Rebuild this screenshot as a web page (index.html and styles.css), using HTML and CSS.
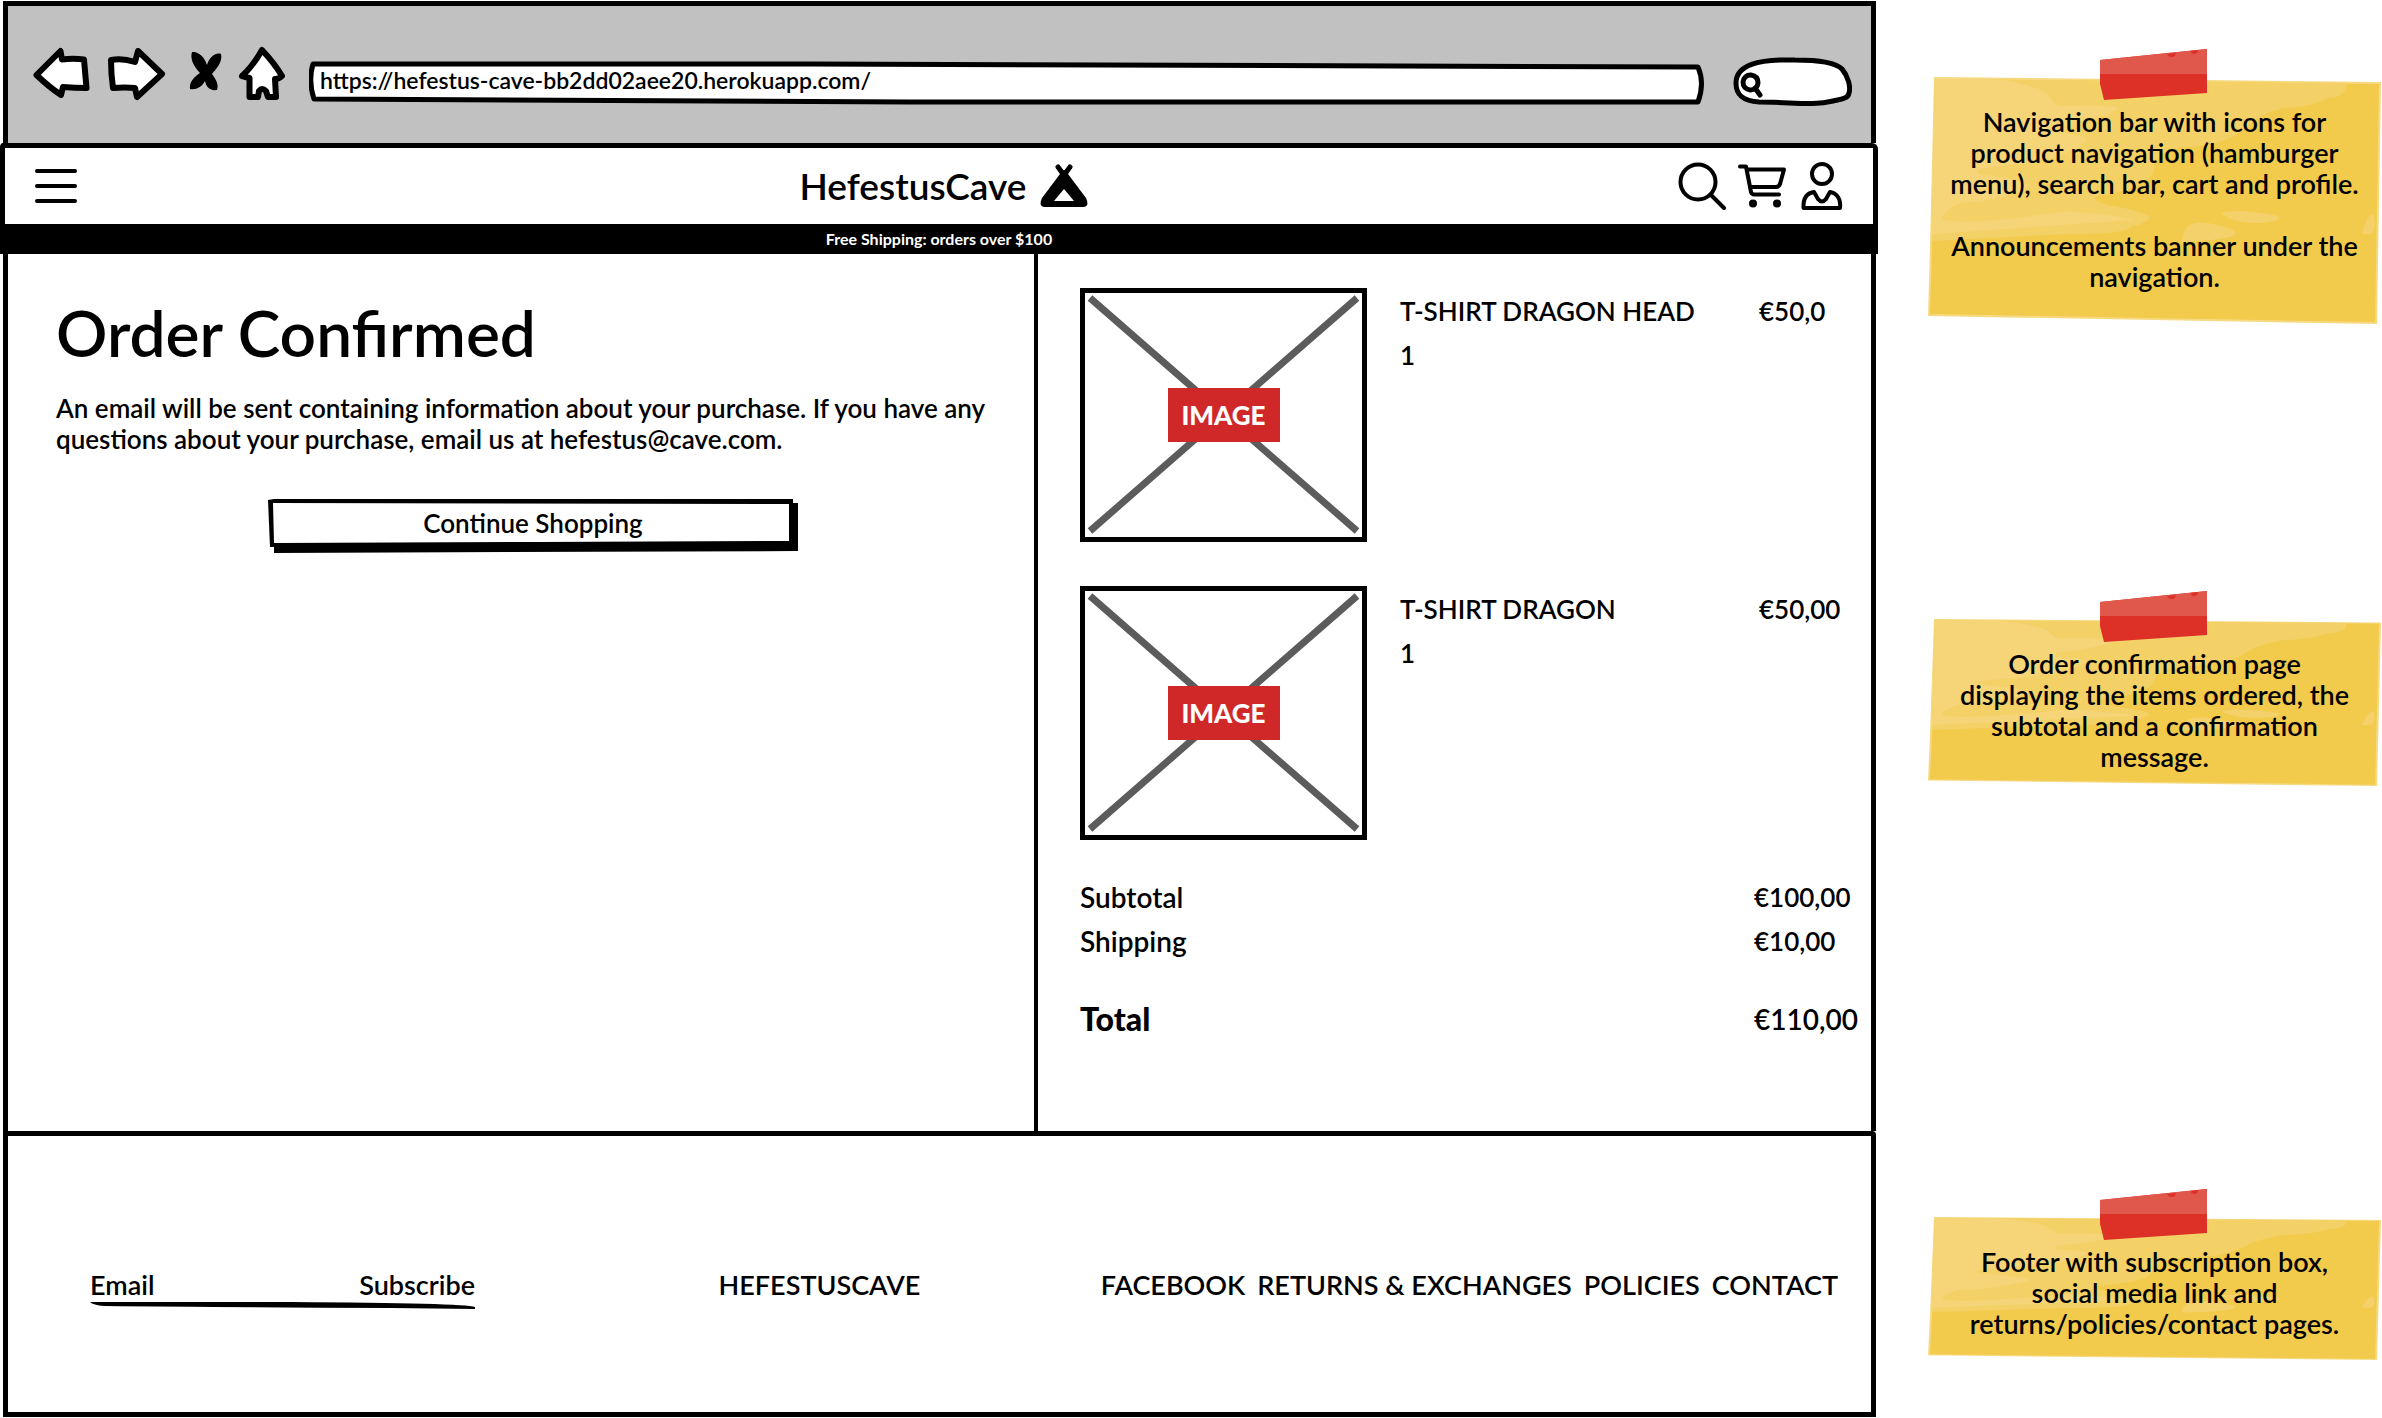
FILE: index.html
```html
<!DOCTYPE html>
<html lang="en">
<head>
<meta charset="utf-8">
<meta name="viewport" content="width=device-width, initial-scale=1">
<title>HefestusCave – Order Confirmed</title>
<link rel="stylesheet" href="styles.css">
</head>
<body>
<svg class="defs" aria-hidden="true">
  <symbol id="note-paper" viewBox="0 0 453 247" preserveAspectRatio="none">
    <path fill="#f6d980" d="M6 0 453 5 449 247 0 239 2 170Z"/>
    <path fill="#f2ca4c" d="M7 2 451 7 447 245 2 237 4 170Z"/>
    <path fill="#f3d166" d="M7 2 418 6Q420 20 400 21Q385 30 355 31Q330 38 318 50Q300 68 260 70Q228 72 226 92Q222 112 170 119Q160 122 180 128Q225 136 221 142Q210 150 205 148Q200 158 140 157L4 164Z"/>
    <path fill="#f5d578" d="M7 2 70 2Q115 10 120 18Q126 28 132 29Q190 28 190 31Q180 40 130 50Q120 56 140 57Q162 60 158 64Q140 82 80 88Q40 92 52 97Q110 105 98 111Q60 127 34 125Q14 134 14 142Q30 150 140 134Q200 140 206 143Q190 144 4 157Z"/>
    <path fill="#f4d16a" d="M293 136Q310 131 350 139Q356 144 335 146Q305 147 293 136ZM254 165Q255 142 280 146Q320 154 302 160Q285 164 254 165ZM435 152Q444 130 446 140Q448 158 440 157Q432 158 435 152Z"/>
  </symbol>
  <symbol id="tape" viewBox="0 0 109 52">
    <path fill="#dd3027" d="M1 11 108 0 108 44 5 51 1 35Z"/>
    <path fill="#e0574c" d="M1 11 108 0 108 25H1Z"/>
    <path fill="#dd3027" d="M68 5 77 4Q76 8 73 8Q69 8 68 5ZM92 2 99 1Q99 5 95 5Q92 5 92 2Z"/>
  </symbol>
</svg>

<div class="page">
  <div class="frame">
    <div class="chrome">
      <div class="chrome-buttons">
        <button class="icon-button" type="button" aria-label="Back">
          <svg width="60" height="56"><path class="sketch" d="M3.500 29 27.500 5 29 13.500Q40 12 51 13.500L53.500 42Q42 42 30 41L28 49Q16 41 3.500 29Z"/></svg>
        </button>
        <button class="icon-button" type="button" aria-label="Forward">
          <svg width="65" height="56"><path class="sketch" d="M8 14Q20 12 32 16L35 5 59 28 34 51 32 42Q22 41 10 42Q8 28 8 14Z"/></svg>
        </button>
        <button class="icon-button" type="button" aria-label="Stop">
          <svg width="51" height="56"><path d="M14 6C21 5 27 12 29 19C31 12 37 6 43 8C45 16 38 23 34 28C38 33 41 39 39 44C31 45 28 40 27 35C24 41 18 44 12 43C11 36 16 31 22 27C15 20 12 12 14 6Z"/></svg>
        </button>
        <button class="icon-button" type="button" aria-label="Home">
          <svg width="46" height="56"><path class="sketch" d="M23 4Q36 18 43 30Q40 33 36 33L37 51H29L27 45Q23 41 20 45L19 51H10.500L10.500 32 3 30Q14 20 23 4Z"/></svg>
        </button>
      </div>
      <div class="address">
        <svg class="backdrop" viewBox="0 0 1394 44" preserveAspectRatio="none"><path class="sketch" d="M4 3H500L1387 6Q1394 22 1387 41H600L5 38Q-1 20 4 3Z"/></svg>
        <input class="address-input" type="text" aria-label="Address" value="https://hefestus-cave-bb2dd02aee20.herokuapp.com/">
      </div>
      <div class="web-search">
        <svg class="backdrop" viewBox="0 0 119 49"><path class="sketch" d="M26 45C10 44 3 38 3 26C3 8 25 2 62 3C85 3 103 6 109 12C115 19 118 30 116 36C115 42 108 42 100 44C80 49 60 45 26 45Z"/><path class="sketch" d="M22 31L27 38M18 18A7.500 7.500 0 1 0 25 26Q25 19 18 18Z"/></svg>
        <input class="web-search-input" type="search" aria-label="Search the web">
      </div>
    </div>

    <header class="navbar">
      <button class="icon-button" type="button" aria-label="Menu">
        <svg width="42" height="36"><path class="line" d="M2 3H40M2 18H40M2 33H40"/></svg>
      </button>
      <a class="brand" href="#">HefestusCave
        <svg width="48" height="44" aria-hidden="true"><path class="line heavy" d="M18 3 26 14M30 3 22 14"/><path fill-rule="evenodd" d="M24 6Q26 6 28 10L46 34Q50 43 43 43H5Q-2 43 2 34L20 10Q22 6 24 6ZM14 37H34L24 25Z"/></svg>
      </a>
      <div class="nav-icons">
        <button class="icon-button" type="button" aria-label="Search">
          <svg width="48" height="48"><path class="line" d="M33 33 46 46"/><circle class="line" cx="20" cy="20" r="17.500"/></svg>
        </button>
        <button class="icon-button" type="button" aria-label="Cart">
          <svg width="48" height="48"><path class="line" d="M2 4.500H8L13 30Q14 32.500 16 32.500H41M9 7.500H46L42 22Q41 25 38 25H12"/><circle cx="15" cy="41.500" r="4"/><circle cx="39" cy="41.500" r="4"/></svg>
        </button>
        <button class="icon-button" type="button" aria-label="Profile">
          <svg width="45" height="48"><circle class="line" cx="24" cy="12" r="10"/><path class="line" d="M5.500 46C5 36 9 31 16 30L20 37Q24 42 28 37L32 30C39 31 43 37 42 46Z"/></svg>
        </button>
      </div>
    </header>
    <p class="banner">Free Shipping: orders over $100</p>

    <main class="order">
      <section class="confirmation">
        <h1>Order Confirmed</h1>
        <p class="message">An email will be sent containing information about your purchase. If you have any questions about your purchase, email us at hefestus@cave.com.</p>
        <button class="continue" type="button">
          <svg class="backdrop" viewBox="0 0 530 54" preserveAspectRatio="none"><path d="M0 1 6 0H525V4H530V52L6 54V48H2Z"/><path fill="#fff" d="M5 4 521 5V42L270 43 6 44Z"/></svg>
          <span class="continue-label">Continue Shopping</span>
        </button>
      </section>

      <section class="cart" aria-label="Order summary">
        <ul class="items">
          <li class="item">
            <div class="picture">
              <svg class="backdrop" viewBox="0 0 277 244" preserveAspectRatio="none"><path class="cross" d="M5 5 272 238M272 5 5 238"/></svg>
              <span class="picture-label">IMAGE</span>
            </div>
            <div><h2>T-SHIRT DRAGON HEAD</h2><p>1</p></div>
            <p>€50,0</p>
          </li>
          <li class="item">
            <div class="picture">
              <svg class="backdrop" viewBox="0 0 277 244" preserveAspectRatio="none"><path class="cross" d="M5 5 272 238M272 5 5 238"/></svg>
              <span class="picture-label">IMAGE</span>
            </div>
            <div><h2>T-SHIRT DRAGON</h2><p>1</p></div>
            <p>€50,00</p>
          </li>
        </ul>
        <table class="totals">
          <tbody>
            <tr><th scope="row">Subtotal</th><td>€100,00</td></tr>
            <tr><th scope="row">Shipping</th><td>€10,00</td></tr>
          </tbody>
          <tfoot>
            <tr><th scope="row">Total</th><td>€110,00</td></tr>
          </tfoot>
        </table>
      </section>
    </main>

    <footer class="footer">
      <form class="subscribe">
        <input class="subscribe-input" type="email" placeholder="Email" aria-label="Email">
        <button class="subscribe-button" type="button">Subscribe</button>
        <svg class="underline" viewBox="0 0 383 7" preserveAspectRatio="none" aria-hidden="true"><path d="M0 0 200 0Q372 1 383 5V7L300 6Q120 5 14 4Q3 3 0 0Z"/></svg>
      </form>
      <p>HEFESTUSCAVE</p>
      <nav class="footer-links">
        <a href="#">FACEBOOK</a>
        <a href="#">RETURNS &amp; EXCHANGES</a>
        <a href="#">POLICIES</a>
        <a href="#">CONTACT</a>
      </nav>
    </footer>
  </div>

  <aside class="notes">
    <div class="note note-nav">
      <svg class="backdrop"><use href="#note-paper"/></svg>
      <svg class="tape"><use href="#tape"/></svg>
      <p>Navigation bar with icons for product navigation (hamburger menu), search bar, cart and profile.</p>
      <p>Announcements banner under the navigation.</p>
    </div>
    <div class="note note-order">
      <svg class="backdrop"><use href="#note-paper"/></svg>
      <svg class="tape"><use href="#tape"/></svg>
      <p>Order confirmation page displaying the items ordered, the subtotal and a confirmation message.</p>
    </div>
    <div class="note note-footer">
      <svg class="backdrop"><use href="#note-paper"/></svg>
      <svg class="tape"><use href="#tape"/></svg>
      <p>Footer with subscription box, social media link and returns/policies/contact pages.</p>
    </div>
  </aside>
</div>
</body>
</html>
```
FILE: styles.css
```css
* { box-sizing: border-box; }

body {
  margin: 0;
  background: #fff;
  color: #000;
  font: 600 26px/44px Lato, "Open Sans", sans-serif;
}

h1, h2, p, ul { margin: 0; padding: 0; font-size: inherit; font-weight: inherit; list-style: none; }
a { color: inherit; text-decoration: none; }
svg { display: block; }
button, input { font: inherit; color: inherit; border: 0; background: none; padding: 0; margin: 0; }
button { cursor: pointer; }

.defs { position: absolute; width: 0; height: 0; }
.sketch { fill: #fff; stroke: #000; stroke-width: 5px; stroke-linejoin: round; stroke-linecap: round; vector-effect: non-scaling-stroke; }
.chrome-buttons .sketch { stroke-width: 6px; }
.line { fill: none; stroke: #000; stroke-width: 4px; stroke-linejoin: round; stroke-linecap: round; }
.line.heavy { stroke-width: 5px; }
.backdrop { position: absolute; inset: 0; width: 100%; height: 100%; }

.page {
  display: grid;
  grid-template-columns: minmax(0, 1fr) 453px;
  column-gap: 52px;
  padding: 1px 1px 1px 3px;
}

/* browser chrome */
.chrome {
  display: flex;
  align-items: flex-start;
  height: 142px;
  padding: 40px 19px 0 25px;
  border: 5px solid #000;
  border-bottom: 0;
  background: #c1c1c1;
}
.chrome-buttons { display: flex; gap: 10px; }
.address { position: relative; flex: 1; height: 44px; margin: 15px 28px 0 24px; }
.address-input { position: relative; display: block; width: 100%; height: 38px; padding: 0 11px; font-size: 23px; outline: 0; }
.web-search { position: relative; width: 119px; height: 49px; margin-top: 11px; }
.web-search-input { position: relative; display: block; width: 100%; height: 49px; padding: 0 12px 0 34px; outline: 0; appearance: none; }

/* site header */
.navbar {
  display: grid;
  grid-template-columns: 765fr auto 755fr;
  align-items: center;
  height: 81px;
  margin: 0 -2px 0 -3px;
  padding: 0 30px;
  border: 5px solid #000;
  border-bottom: 0;
  border-radius: 4px 6px 0 0;
}
.icon-button { justify-self: start; }
.brand { display: flex; align-items: center; gap: 14px; font-size: 37px; }
.nav-icons { display: flex; gap: 12px; justify-self: end; }
.banner {
  margin: 0 -2px 0 -3px;
  background: #000;
  color: #fff;
  font-size: 16px;
  font-weight: 700;
  line-height: 30px;
  text-align: center;
}

/* order */
.order {
  display: grid;
  grid-template-columns: 1026fr 837fr;
  border: solid #000;
  border-width: 0 5px;
}
.confirmation { padding: 48px 24px 48px 48px; }
h1 { font-size: 64px; line-height: 62px; }
.message { margin-top: 29px; line-height: 31px; }
.continue { position: relative; display: block; width: 530px; max-width: 100%; height: 54px; margin: 44px auto 0; }
.continue-label { position: relative; display: block; height: 54px; line-height: 48px; }

.cart { padding: 34px 0 90px 42px; border-left: 4px solid #000; }
.items { display: grid; gap: 44px; }
.item { display: grid; grid-template-columns: 287px 1fr 112px; column-gap: 33px; }
.item > :not(.picture) { padding-top: 1px; }
.picture { position: relative; display: grid; place-items: center; height: 254px; border: 5px solid #000; }
.cross { stroke: #5c5c5c; stroke-width: 7px; }
.picture-label { position: relative; width: 112px; background: #d02828; color: #fff; font-weight: 900; line-height: 54px; text-align: center; }

.totals { width: 100%; margin-top: 35px; border-collapse: collapse; }
.totals th, .totals td { padding: 0; font-weight: 600; text-align: left; }
.totals td { width: 117px; }
.totals tbody th { font-size: 28px; }
.totals tfoot th, .totals tfoot td { padding-top: 34px; font-size: 28px; }
.totals tfoot th { font-size: 32px; font-weight: 900; }

/* footer */
.footer {
  display: grid;
  grid-template-columns: 630fr 383fr auto;
  align-items: start;
  padding: 129px 33px 107px 82px;
  border: 5px solid #000;
  border-radius: 0 4px 0 0;
  font-size: 27px;
  line-height: 40px;
}
.subscribe { display: grid; grid-template-columns: 1fr auto; width: 385px; }
.subscribe-input { width: 100%; height: 40px; outline: 0; }
.subscribe-input::placeholder { color: #000; opacity: 1; }
.subscribe-button { height: 40px; }
.underline { grid-column: 1 / -1; width: 100%; height: 7px; margin: -3px 0 -4px; }
.footer-links { display: flex; gap: 12px; }

/* sticky notes */
.notes { display: flex; flex-direction: column; padding-top: 76px; }
.note { position: relative; padding: 29px 20px 0; font-size: 27px; line-height: 31px; text-align: center; }
.note p { position: relative; }
.note p + p { margin-top: 31px; }
.tape { position: absolute; top: -28px; left: 171px; width: 109px; height: 52px; }
.note-nav { padding-bottom: 32px; }
.note-order { margin-top: 295px; padding-bottom: 14px; }
.note-footer { margin-top: 431px; padding-bottom: 21px; }
```
